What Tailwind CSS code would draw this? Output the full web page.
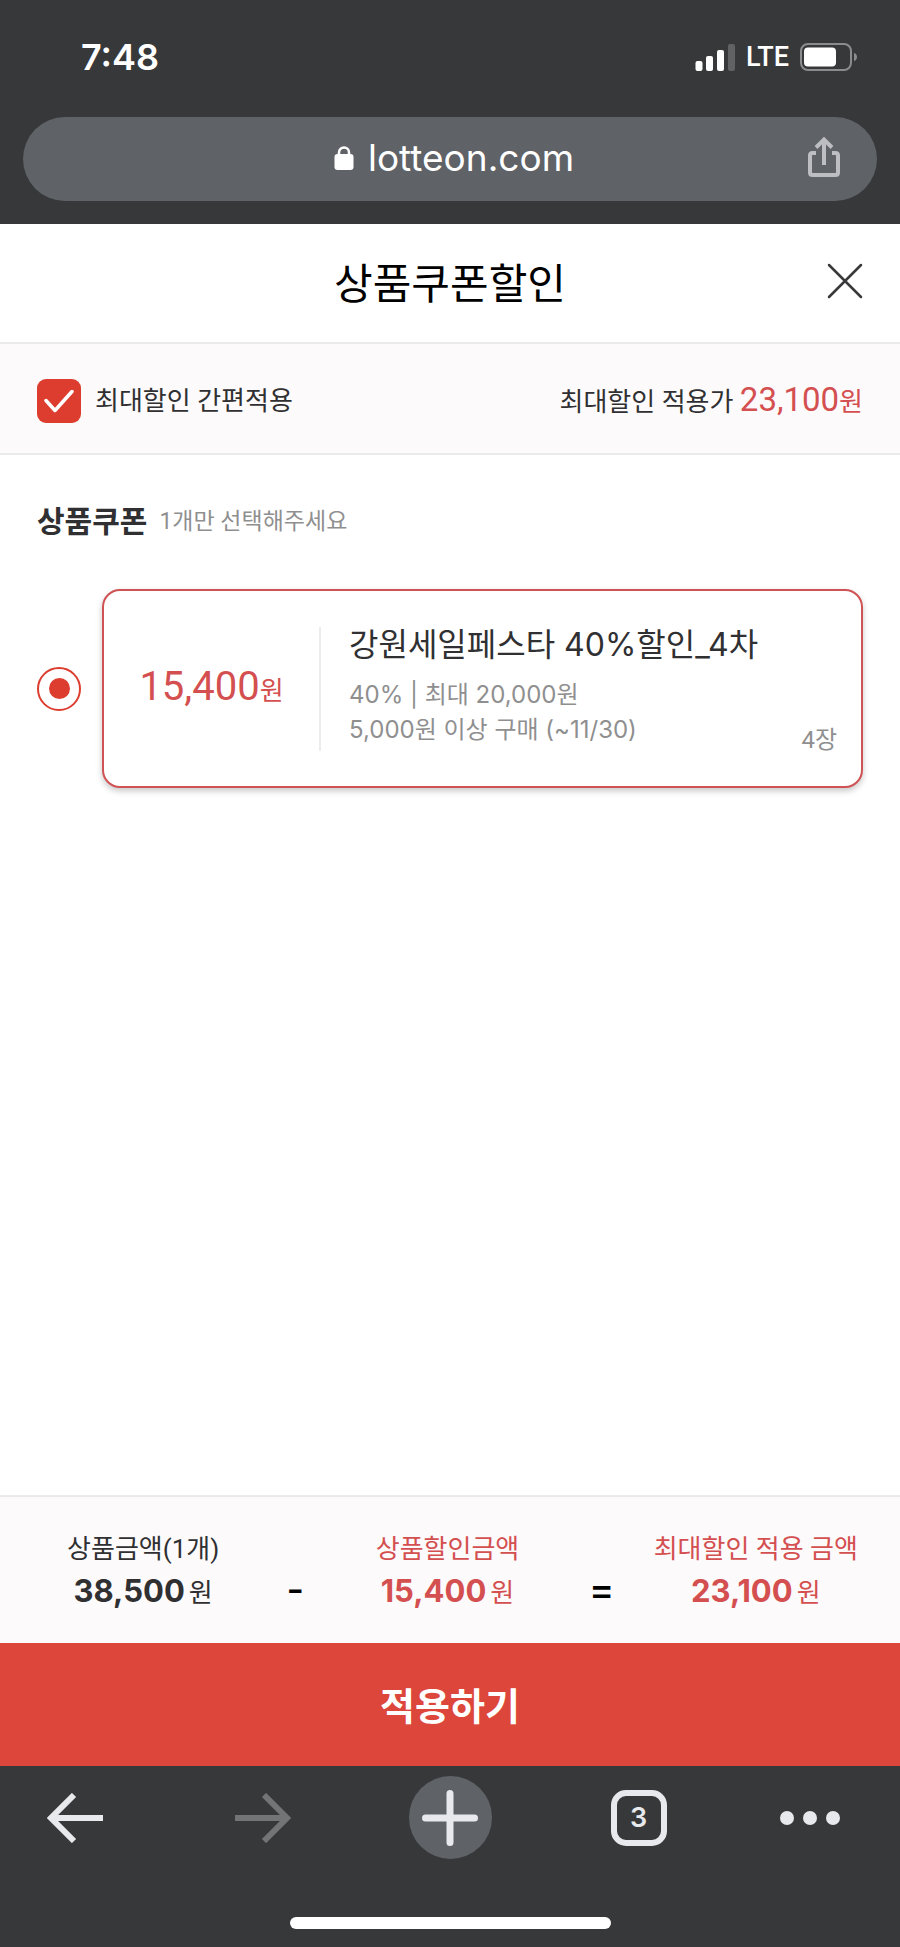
<!DOCTYPE html>
<html lang="ko">
<head>
<meta charset="utf-8">
<meta name="viewport" content="width=device-width, initial-scale=1">
<title>상품쿠폰할인</title>
<script src="https://cdn.jsdelivr.net/npm/@tailwindcss/browser@4"></script>
</head>
<body class="flex min-h-screen flex-col bg-white font-['Roboto','Noto_Sans_CJK_KR',sans-serif] text-[#303032]">

  <!-- Status bar and address bar -->
  <div class="bg-[#373839] px-[23px] pb-[23px] text-white font-['Inter','Noto_Sans_CJK_KR',sans-serif]">
    <div class="flex h-[117px] items-center justify-between pr-[19px] pb-[3px] pl-[58px]">
      <time class="text-[36px] leading-10 font-semibold">7:48</time>
      <div class="flex items-center gap-[11px]">
        <svg class="h-[27px] w-10" viewBox="0 0 40 27" fill="#fff" aria-label="signal">
          <rect x="0.5" y="17" width="7" height="10" rx="2"/>
          <rect x="11" y="12" width="7" height="15" rx="2"/>
          <rect x="22" y="6" width="7" height="21" rx="2"/>
          <rect x="33" y="0" width="7" height="27" rx="2" fill="#616264"/>
        </svg>
        <span class="text-[27px] leading-8 font-medium font-['Roboto',sans-serif]">LTE</span>
        <svg class="h-7 w-[58px]" viewBox="0 0 58 28" aria-label="battery">
          <rect x="1" y="1" width="50" height="26" rx="7" fill="none" stroke="#8b8c8d" stroke-width="2"/>
          <rect x="4" y="4.500" width="32" height="19" rx="4" fill="#fff"/>
          <path d="M54 10c4 1 4 7 0 8z" fill="#8b8c8d"/>
        </svg>
      </div>
    </div>
    <div class="flex h-[84px] items-center rounded-full bg-[#5f6267] px-[35px] pb-1">
      <span class="w-11"></span>
      <a href="https://lotteon.com" class="flex flex-1 items-center justify-center gap-[14px] pt-0.5 text-[37px] leading-[44px]">
        <svg class="h-6 w-5" viewBox="0 0 20 24" aria-hidden="true">
          <path d="M5 10V6.500a5 5 0 0 1 10 0V10" fill="none" stroke="#fff" stroke-width="2.500"/>
          <rect x="0.500" y="8" width="19" height="16" rx="3" fill="#fff"/>
        </svg>
        lotteon.com
      </a>
      <button type="button" aria-label="공유" class="flex w-9 justify-center">
        <svg class="h-[42px] w-8" viewBox="0 0 32 42" fill="none" stroke="#bcbec2" stroke-width="4">
          <path d="M8 17H4.500Q2 17 2 19.500V36.500Q2 39 4.500 39H27.500Q30 39 30 36.500V19.500Q30 17 27.500 17H24"/>
          <path d="M16 29V4M8 11.500L16 3.500L24 11.500"/>
        </svg>
      </button>
    </div>
  </div>

  <header class="flex h-[120px] items-center border-b-2 border-[#ebeaeb] px-[37px] pb-1">
    <span class="w-9"></span>
    <h1 class="flex-1 pt-2 text-center text-[42px] leading-[60px] text-black">상품쿠폰할인</h1>
    <button type="button" aria-label="닫기" class="flex w-9 justify-center">
      <svg class="h-9 w-9" viewBox="0 0 36 36" fill="none" stroke="#39393b" stroke-width="2.500" stroke-linecap="round">
        <path d="M2 2L34 34M34 2L2 34"/>
      </svg>
    </button>
  </header>

  <section class="flex h-[111px] items-center justify-between border-b-2 border-[#ebeaeb] bg-[#fcfafb] px-[37px] pt-1 text-[26px] leading-9">
    <label class="flex items-center gap-[14px]">
      <span class="grid size-11 place-items-center">
        <input type="checkbox" checked class="size-11 appearance-none rounded-[9px] bg-[#dc3d2e] [grid-area:1/1]">
        <svg class="pointer-events-none h-6 w-[30px] [grid-area:1/1]" viewBox="0 0 30 24" fill="none" stroke="#fff" stroke-width="3.500" stroke-linecap="round" stroke-linejoin="round" aria-hidden="true">
          <path d="M2 11.500L11 21.500L28 2.500"/>
        </svg>
      </span>
      최대할인 간편적용
    </label>
    <p>최대할인 적용가 <span class="text-[#d44f50]"><span class="text-[33px]">23,100</span>원</span></p>
  </section>

  <main class="flex-1 px-[37px] pt-11">
    <h2 class="flex items-center gap-3 text-[30px] leading-[46px] font-bold">상품쿠폰 <small class="text-[23px] font-normal text-[#8f8f90]">1개만 선택해주세요</small></h2>

    <div class="mt-11 flex items-center gap-[21px]">
      <input type="radio" name="coupon" id="coupon" checked class="grid size-11 shrink-0 appearance-none place-items-center rounded-full border-2 border-[#dc3d2e] bg-white before:size-[21px] before:rounded-full before:bg-[#dc3d2e] before:content-['']">
      <label for="coupon" class="flex h-[199px] flex-1 items-center rounded-[18px] border-2 border-[#cf5355] bg-white pr-6 shadow-[0_3px_6px_rgba(0,0,0,0.22)]">
        <span class="w-[215px] text-center text-[26px] leading-[48px] text-[#d44f50]"><span class="text-[40px]">15,400</span>원</span>
        <span class="h-[124px] border-l-2 border-[#ececed]"></span>
        <span class="flex flex-1 flex-col pb-[7px] pl-7 font-['Inter','Noto_Sans_CJK_KR',sans-serif]">
          <span class="pb-[10px] text-[32px] leading-[44px]">강원세일페스타 40%할인_4차</span>
          <span class="text-[24px] leading-[35px] text-[#8f8f90]">40% | 최대 20,000원</span>
          <span class="text-[24px] leading-[35px] text-[#8f8f90]">5,000원 이상 구매 (~11/30)</span>
        </span>
        <span class="self-end pb-7 text-[24px] leading-9 text-[#8f8f90]">4장</span>
      </label>
    </div>
  </main>

  <section class="flex h-[148px] border-t-2 border-[#ebeaeb] bg-[#fcfafb] pt-[31px] pr-1 pl-[3px] text-center text-[26px] leading-[42px]">
    <dl class="flex-1">
      <dt>상품금액(1개)</dt>
      <dd class="flex items-baseline justify-center gap-1"><b class="text-[31px] font-['Inter',sans-serif]">38,500</b>원</dd>
    </dl>
    <span class="w-6 pt-10 text-[38px] font-medium text-black font-['Inter',sans-serif]">-</span>
    <dl class="flex-1 text-[#d44f50]">
      <dt>상품할인금액</dt>
      <dd class="flex items-baseline justify-center gap-1"><b class="text-[31px] font-['Inter',sans-serif]">15,400</b>원</dd>
    </dl>
    <span class="w-7 pt-10 text-[38px] font-medium text-black font-['Inter',sans-serif]">=</span>
    <dl class="flex-1 text-[#d44f50]">
      <dt>최대할인 적용 금액</dt>
      <dd class="flex items-baseline justify-center gap-1"><b class="text-[31px] font-['Inter',sans-serif]">23,100</b>원</dd>
    </dl>
  </section>

  <button type="button" class="h-[123px] bg-[#dd463a] pt-1 text-[38px] leading-[56px] font-bold text-white">적용하기</button>

  <!-- Browser toolbar -->
  <footer class="bg-[#373839] pt-[10px] pb-[18px]">
    <nav class="grid h-[83px] grid-cols-[149fr_227fr_148fr_229fr_114fr] items-center justify-items-center pr-[33px]">
      <button type="button" aria-label="뒤로">
        <svg class="h-[50px] w-14" viewBox="0 0 56 50" fill="none" stroke="#e8e9ed" stroke-width="6">
          <path d="M56 25H5M27 2L4 25L27 48"/>
        </svg>
      </button>
      <button type="button" aria-label="앞으로">
        <svg class="h-[50px] w-14" viewBox="0 0 56 50" fill="none" stroke="#737475" stroke-width="6">
          <path d="M0 25H51M29 2L52 25L29 48"/>
        </svg>
      </button>
      <button type="button" aria-label="새 탭" class="grid size-[83px] place-items-center rounded-full bg-[#5f6267]">
        <svg class="size-14" viewBox="0 0 56 56" stroke="#e8e9ed" stroke-width="7" stroke-linecap="round">
          <path d="M28 3.500V52.500M3.500 28H52.500"/>
        </svg>
      </button>
      <button type="button" aria-label="탭 3개" class="grid size-14 place-items-center rounded-[15px] border-6 border-[#e8e9ed] text-[27px] leading-8 font-semibold text-[#e8e9ed] font-['Inter',sans-serif]">3</button>
      <button type="button" aria-label="더보기">
        <svg class="h-4 w-[60px]" viewBox="0 0 60 16" fill="#e8e9ed">
          <circle cx="7" cy="8" r="7"/><circle cx="30" cy="8" r="7"/><circle cx="53" cy="8" r="7"/>
        </svg>
      </button>
    </nav>
    <div class="mx-auto mt-[58px] h-3 w-[321px] rounded-full bg-white"></div>
  </footer>
</body>
</html>
